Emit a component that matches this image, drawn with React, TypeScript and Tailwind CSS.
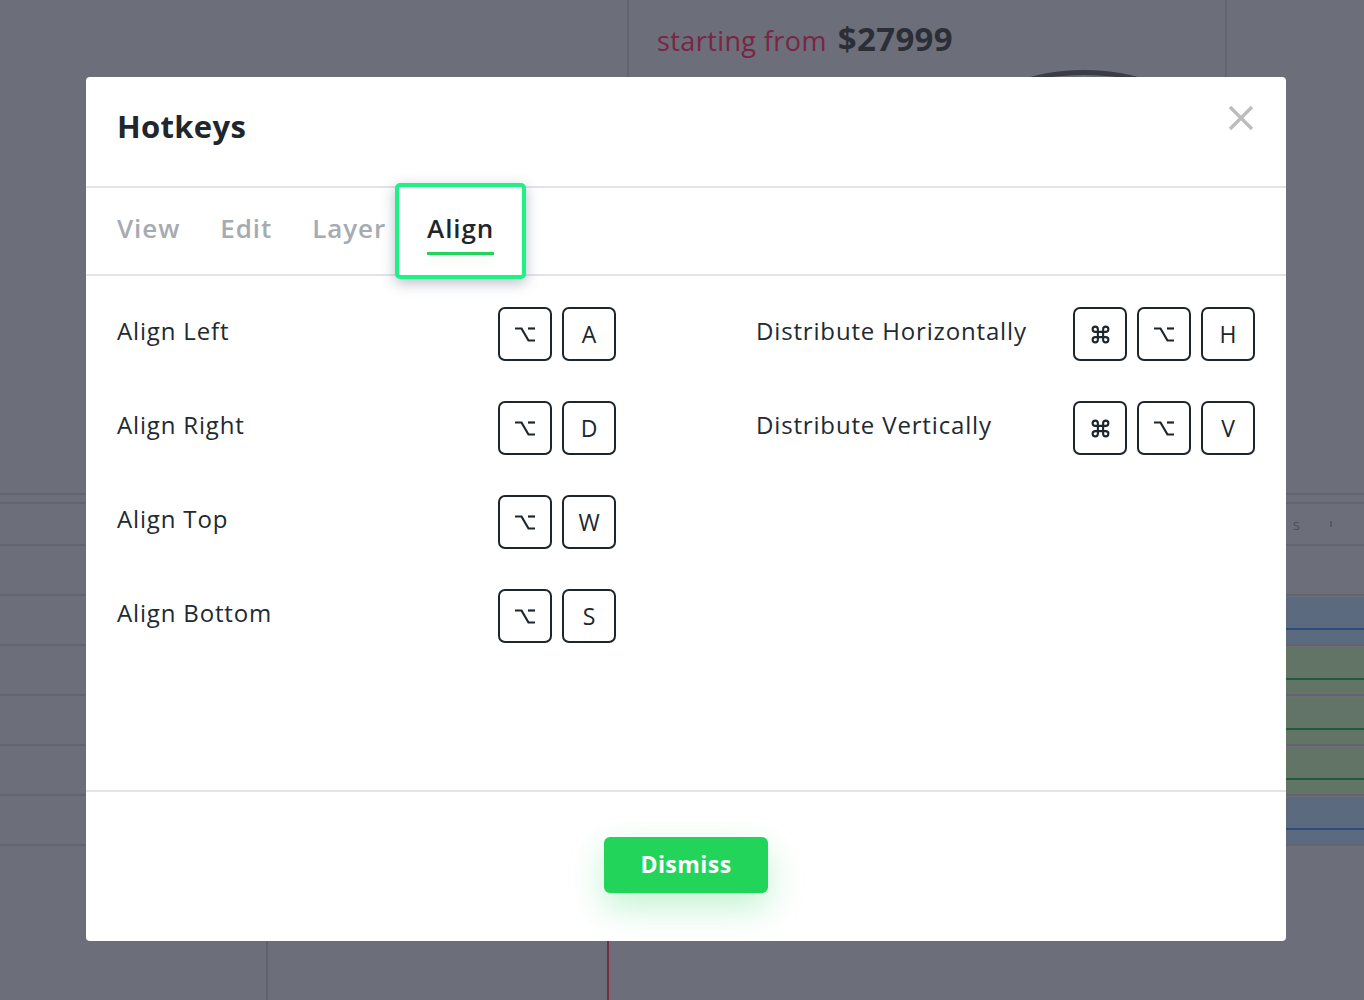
import { Command } from 'lucide-react'

type KeyName = 'cmd' | 'opt' | string

const LEFT_ROWS: [string, KeyName[]][] = [
  ['Align Left', ['opt', 'A']],
  ['Align Right', ['opt', 'D']],
  ['Align Top', ['opt', 'W']],
  ['Align Bottom', ['opt', 'S']],
]

const RIGHT_ROWS: [string, KeyName[]][] = [
  ['Distribute Horizontally', ['cmd', 'opt', 'H']],
  ['Distribute Vertically', ['cmd', 'opt', 'V']],
]

const BANDS = ['blue', 'green', 'green', 'green', 'blue'] as const

function OptionGlyph() {
  return (
    <svg width="22" height="17" viewBox="0 0 22 17" fill="none" stroke="#1c262c" strokeWidth="2.2">
      <path d="M1 2.5h6.5l7 12h6.5" />
      <path d="M14 2.5h7" />
    </svg>
  )
}

function Key({ name }: { name: KeyName }) {
  return (
    <span className="flex h-[54px] w-[54px] items-center justify-center rounded-[7px] border-2 border-[#1c262c] text-[23px] leading-none text-[#1c262c]">
      {name === 'opt' ? <OptionGlyph /> : name === 'cmd' ? <Command size={21} strokeWidth={2.4} /> : name}
    </span>
  )
}

function HotkeyRow({ label, keys }: { label: string; keys: KeyName[] }) {
  return (
    <div className="flex h-[54px] items-center justify-between">
      <span className="-translate-y-[3px] text-[24px] tracking-[0.035em] text-[#222a30]">{label}</span>
      <div className="flex gap-[10px]">
        {keys.map((k, i) => (
          <Key key={i} name={k} />
        ))}
      </div>
    </div>
  )
}

export default function App() {
  return (
    <div className="relative h-[1000px] w-[1364px] overflow-hidden bg-[#6c6e79] font-['Open_Sans',sans-serif]">
      {/* dimmed page behind the modal */}
      <div className="flex h-[493px]">
        <div className="w-[629px] border-r-2 border-[#62646e]" />
        <div className="relative w-[598px] border-r-2 border-[#62646e] pl-[28px] pt-[14px]">
          <p className="flex items-baseline gap-[11px]">
            <span className="text-[27px] tracking-[0.015em] text-[#7b2444]">starting from</span>
            <span className="text-[33px] font-bold tracking-[0.01em] text-[#2c2e37]">$27999</span>
          </p>
          <div className="absolute left-[360px] top-[70px] h-[80px] w-[190px] rounded-[50%] border-t-[5px] border-[#3b3d46]" />
        </div>
        <div className="flex-1" />
      </div>
      <div className="h-[11px] border-y-2 border-[#62646e]" />
      <div className="flex h-[42px] items-center justify-end border-b-2 border-[#62646e] pr-[32px]">
        <span className="text-[15px] text-[#4e505a]">s</span>
        <span className="ml-[30px] h-[6px] w-[2px] bg-[#565862]" />
      </div>
      <div className="h-[50px] border-b-2 border-[#62646e]" />
      {BANDS.map((b, i) => (
        <div key={i} className="flex h-[50px] items-start justify-end border-b-2 border-[#62646e]">
          <div className={`mt-[1px] h-[47px] w-[80px] ${b === 'blue' ? 'bg-[#5c6a80]' : 'bg-[#617465]'}`}>
            <div className={`h-[33px] border-b-2 ${b === 'blue' ? 'border-[#2d4d7d]' : 'border-[#1f5a3b]'}`} />
          </div>
        </div>
      ))}
      <div className="flex h-[160px]">
        <div className="w-[268px] border-r-2 border-[#5f616b]" />
        <div className="w-[341px] border-r-2 border-[#7a2c3f]" />
      </div>

      {/* modal */}
      <div className="absolute left-[86px] top-[77px] flex h-[864px] w-[1200px] flex-col rounded-[4px] bg-white">
        <div className="flex h-[111px] shrink-0 items-center justify-between border-b-2 border-[#e3e3e8] pl-[31px] pr-[32px]">
          <h2 className="-translate-y-[5px] text-[31px] font-bold tracking-[0.01em] text-[#1f272d]">Hotkeys</h2>
          <svg width="26" height="26" viewBox="0 0 26 26" className="-translate-y-[14px]" stroke="#bcbcbc" strokeWidth="3.2">
            <path d="M2 2l22 22M24 2L2 24" />
          </svg>
        </div>

        <div className="flex h-[88px] shrink-0 items-center gap-[40px] border-b-2 border-[#e3e3e8] px-[31px] text-[26px] font-semibold tracking-[0.035em]">
          <span className="-translate-y-[3px] text-[#a6abb2]">View</span>
          <span className="-translate-y-[3px] text-[#a6abb2]">Edit</span>
          <span className="-translate-y-[3px] text-[#a6abb2]">Layer</span>
          <span className="relative ml-[1px] flex h-full items-center">
            <span className="absolute -bottom-[5px] -left-[32px] -right-[32px] -top-[5px] z-10 rounded-[5px] border-4 border-[#1ef285] bg-white shadow-[0_4px_14px_rgba(60,70,110,0.35)]" />
            <span className="relative z-20 -translate-y-[3px] text-[#1f272d]">Align</span>
            <span className="absolute bottom-[19px] left-0 right-0 z-20 h-[3px] bg-[#22d45a] shadow-[0_6px_10px_rgba(34,212,90,0.12)]" />
          </span>
        </div>

        <div className="grid flex-1 grid-cols-2 gap-x-[140px] px-[31px] pt-[31px]">
          <div className="flex flex-col gap-[40px]">
            {LEFT_ROWS.map(([label, keys]) => (
              <HotkeyRow key={label} label={label} keys={keys} />
            ))}
          </div>
          <div className="flex flex-col gap-[40px]">
            {RIGHT_ROWS.map(([label, keys]) => (
              <HotkeyRow key={label} label={label} keys={keys} />
            ))}
          </div>
        </div>

        <div className="flex h-[151px] shrink-0 items-center justify-center border-t-2 border-[#e3e3e8] pb-[4px]">
          <button className="h-[56px] w-[164px] rounded-[6px] bg-[#22d45a] text-[23px] font-bold tracking-[0.02em] text-white shadow-[0_14px_34px_rgba(34,212,90,0.28)]">
            Dismiss
          </button>
        </div>
      </div>
    </div>
  )
}
